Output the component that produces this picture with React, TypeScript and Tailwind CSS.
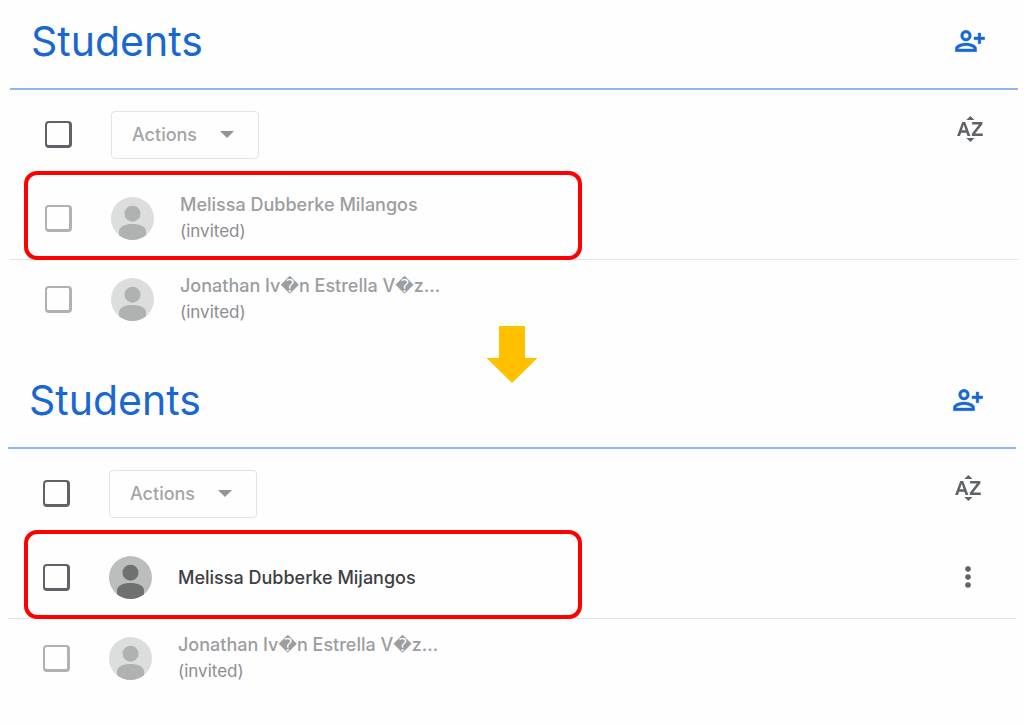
import { useState } from 'react';
import clsx from 'clsx';

type Student = {
  name: string;
  invited: boolean;
};

const before: Student[] = [
  { name: 'Melissa Dubberke Milangos', invited: true },
  { name: 'Jonathan Iv\uFFFDn Estrella V\uFFFDz...', invited: true },
];

const after: Student[] = [
  { name: 'Melissa Dubberke Mijangos', invited: false },
  { name: 'Jonathan Iv\uFFFDn Estrella V\uFFFDz...', invited: true },
];

const PersonAddIcon = () => (
  <svg
    viewBox="0 0 24 24"
    className="size-8"
    fill="currentColor"
    stroke="currentColor"
    strokeWidth="0.3"
    aria-hidden="true"
  >
    <path d="M13 8c0-2.21-1.79-4-4-4S5 5.79 5 8s1.79 4 4 4 4-1.79 4-4zm-2 0c0 1.1-.9 2-2 2s-2-.9-2-2 .9-2 2-2 2 .9 2 2zM1 17.6V20h16v-2.4c0-2.9-5.33-4.1-8-4.1s-8 1.2-8 4.1zm2 .4c.2-1.4 3.3-2.5 6-2.5 2.69 0 5.77 1.1 6 2.5H3zM20.1 14v-3H23V9h-2.9V6h-2v3H15v2h3.1v3h2z" />
  </svg>
);

const SortIcon = () => (
  <svg viewBox="0 0 24 24" className="size-8" fill="currentColor" aria-hidden="true">
    <path d="M12.3 2.200l3.100 3.100H9.200zM12.3 21.800l3.100-3.100H9.200z" />
    <path d="M6.200 6.700L2.300 17.200h2.200l.8-2.400h4l.8 2.400h2.200L8.400 6.700H6.200zm-.3 6.200l1.400-4 1.400 4H5.900zM15.900 15.300h5.700v1.900h-8.200v-1.700l5.300-6.900h-5.100V6.700h7.700v1.700l-5.400 6.900z" />
  </svg>
);

const MoreIcon = () => (
  <svg viewBox="0 0 24 24" className="size-8" fill="currentColor" aria-hidden="true">
    <circle cx="12" cy="6" r="2.1" />
    <circle cx="12" cy="12" r="2.1" />
    <circle cx="12" cy="18" r="2.1" />
  </svg>
);

const Avatar = ({ faded }: { faded: boolean }) => (
  <svg viewBox="0 0 43 43" className="size-[43px] shrink-0" aria-hidden="true">
    <circle cx="21.5" cy="21.5" r="21.5" fill={faded ? '#dcdddd' : '#bcbebe'} />
    <g fill={faded ? '#b0b2b2' : '#6f7070'}>
      <circle cx="21.5" cy="16.7" r="8" />
      <path d="M8 34.5c0-5 6-7.500 13.500-7.500S35 29.500 35 34.500v3.700A21.500 21.500 0 0 1 8 38.200z" />
    </g>
  </svg>
);

const Checkbox = ({ label, faded = false }: { label: string; faded?: boolean }) => (
  <input
    type="checkbox"
    aria-label={label}
    className={clsx(
      'size-[27px] shrink-0 appearance-none rounded border-2 border-r-3 border-b-3 checked:bg-[#1967d2]',
      faded ? 'border-[#afb1b3]' : 'border-[#5f6368]'
    )}
  />
);

const StudentRow = ({ student, frame }: { student: Student; frame?: string }) => (
  <li className="relative flex h-[81px] items-center border-b border-[#e3e3e3] pr-8 pb-0.5 pl-[35px] last:border-transparent">
    <Checkbox label={student.name} faded={student.invited} />
    <div className="ml-[39px] flex">
      <Avatar faded={student.invited} />
    </div>
    <div className="ml-[26px] flex-1 whitespace-nowrap">
      <p
        className={clsx(
          'text-[18px] leading-[27px] font-medium',
          student.invited ? 'text-[#9b9d9f]' : 'text-[#3c4043]'
        )}
      >
        {student.name}
      </p>
      {student.invited && <p className="text-[17px] leading-[27px] text-[#8b8d90]">(invited)</p>}
    </div>
    {!student.invited && (
      <button type="button" aria-label="More options" className="text-[#5f6368]">
        <MoreIcon />
      </button>
    )}
    {/* Red frame around the row that changes */}
    {frame && (
      <div
        className={clsx(
          'pointer-events-none absolute -top-2 -bottom-px w-[558px] rounded-[13px] border-4 border-[#ff0000]',
          frame
        )}
      />
    )}
  </li>
);

type StudentListProps = {
  students: Student[];
  className: string;
  frame: string;
};

const StudentList = ({ students, className, frame }: StudentListProps) => {
  const [open, setOpen] = useState<boolean>(false);

  return (
    <section className={className}>
      <header className="flex h-[90px] items-center justify-between border-b-2 border-[#8fb4f8] pr-8 pb-1.5 pl-[21px] text-[#1967d2]">
        <h2 className="text-[41px] leading-[48px]">Students</h2>
        <button type="button" aria-label="Invite students">
          <PersonAddIcon />
        </button>
      </header>
      <div className="flex h-[89px] items-center pr-8 pl-[35px]">
        <Checkbox label="Select all students" />
        <button
          type="button"
          aria-expanded={open}
          onClick={() => setOpen(!open)}
          className="ml-[39px] flex h-12 w-[148px] items-center justify-between rounded border border-[#e3e3e3] pr-6 pl-5 text-[18px] font-medium text-[#a3a5a6]"
        >
          Actions
          <svg viewBox="0 0 14 7" className="h-[7px] w-[14px]" fill="#929496" aria-hidden="true">
            <path d="M0 0h14L7 7z" />
          </svg>
        </button>
        <button type="button" aria-label="Sort by name" className="mb-3 ml-auto text-[#5f6368]">
          <SortIcon />
        </button>
      </div>
      <ul>
        {students.map((student, index) => (
          <StudentRow key={student.name} student={student} frame={index === 0 ? frame : undefined} />
        ))}
      </ul>
    </section>
  );
};

const App: React.FC = () => {
  return (
    <main className="min-h-screen bg-[#fefefe] font-['Inter','DejaVu_Sans',sans-serif]">
      <StudentList students={before} className="mr-[6px] ml-[10px]" frame="left-[14px]" />
      <div className="relative h-[18px]">
        <svg
          viewBox="0 0 51 57"
          className="absolute -top-[15px] left-1/2 h-[57px] w-[51px] -translate-x-1/2"
          fill="#ffc000"
          aria-hidden="true"
        >
          <path d="M12.500 0h26v32H51L25.500 57 0 32h12.500z" />
        </svg>
      </div>
      <StudentList students={after} className="mr-2 ml-2" frame="left-4" />
    </main>
  );
};

export default App;
